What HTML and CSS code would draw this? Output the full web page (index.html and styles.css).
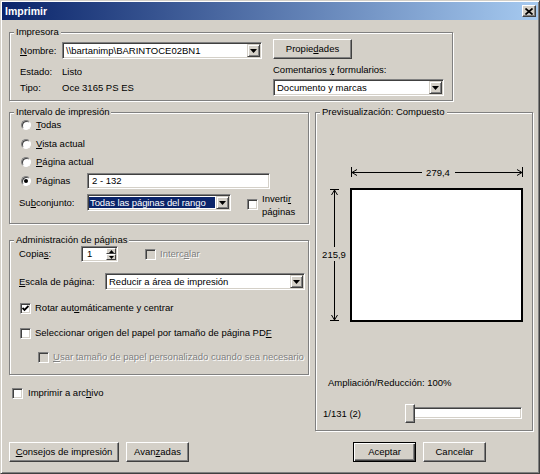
FILE: index.html
```html
<!DOCTYPE html>
<html lang="es">
<head>
<meta charset="utf-8">
<title>Imprimir</title>
<link rel="stylesheet" href="styles.css">
</head>
<body>
<div class="window">
  <div class="titlebar">
    <span class="title">Imprimir</span>
    <span class="close"><svg width="8" height="7" viewBox="0 0 8 7"><path d="M0.5 0.5L7.5 6.5M7.5 0.5L0.5 6.5" stroke="#000" stroke-width="1.7" fill="none"/></svg></span>
  </div>
  <div class="content">
    <fieldset class="group g-printer">
      <legend>Impresora</legend>
      <div class="printer-body">
        <div class="printer-left">
          <div class="prow prow-name">
            <span class="plabel"><u>N</u>ombre:</span>
            <div class="combo w-name"><span class="combo-text">\\bartanimp\BARINTOCE02BN1</span><span class="drop"><svg width="7" height="4" viewBox="0 0 7 4"><path d="M0 0H7L3.5 4Z"/></svg></span></div>
          </div>
          <div class="prow prow-info first-info"><span class="plabel">Estado:</span><span>Listo</span></div>
          <div class="prow prow-info"><span class="plabel">Tipo:</span><span>Oce 3165 PS ES</span></div>
        </div>
        <div class="printer-right">
          <button class="btn btn-props">Propie<u>d</u>ades</button>
          <div class="label-comments">Comentarios <u>y</u> formularios:</div>
          <div class="combo w-comments"><span class="combo-text">Documento y marcas</span><span class="drop"><svg width="7" height="4" viewBox="0 0 7 4"><path d="M0 0H7L3.5 4Z"/></svg></span></div>
        </div>
      </div>
    </fieldset>

    <div class="main">
      <div class="col-left">
        <fieldset class="group g-range">
          <legend>Intervalo de impresión</legend>
          <div class="range-body">
            <div class="radio-row"><span class="radio"></span><span><u>T</u>odas</span></div>
            <div class="radio-row"><span class="radio"></span><span><u>V</u>ista actual</span></div>
            <div class="radio-row"><span class="radio"></span><span><u>P</u>ágina actual</span></div>
            <div class="radio-row"><span class="radio checked"><i class="dot"></i></span><span class="pages-label">Pá<u>g</u>inas</span><div class="field w-pages">2 - 132</div></div>
            <div class="subset-row">
              <span class="subset-label">Su<u>b</u>conjunto:</span>
              <div class="combo w-subset"><span class="combo-text selected">Todas las páginas del rango</span><span class="drop"><svg width="7" height="4" viewBox="0 0 7 4"><path d="M0 0H7L3.5 4Z"/></svg></span></div>
              <span class="cb invert-cb"></span>
              <span class="invert-text">Inverti<u>r</u><br>páginas</span>
            </div>
          </div>
        </fieldset>

        <fieldset class="group g-pages">
          <legend>Administración de páginas</legend>
          <div class="pages-body">
            <div class="copies-row">
              <span class="copies-label">Copia<u>s</u>:</span>
              <div class="spin">
                <span class="spin-text">1</span>
                <span class="spin-btns">
                  <span class="spin-btn"><svg width="5" height="3" viewBox="0 0 5 3"><path d="M0 3H5L2.5 0Z"/></svg></span>
                  <span class="spin-btn"><svg width="5" height="3" viewBox="0 0 5 3"><path d="M0 0H5L2.5 3Z"/></svg></span>
                </span>
              </div>
              <span class="cb disabled collate-cb"></span>
              <span class="disabled-text">Interc<u>a</u>lar</span>
            </div>
            <div class="scale-row">
              <span class="scale-label"><u>E</u>scala de página:</span>
              <div class="combo w-scale"><span class="combo-text">Reducir a área de impresión</span><span class="drop"><svg width="7" height="4" viewBox="0 0 7 4"><path d="M0 0H7L3.5 4Z"/></svg></span></div>
            </div>
            <div class="check-row rotate-row">
              <span class="cb"><svg width="7" height="7" viewBox="0 0 7 7"><path d="M0.5 3L2.5 5L6.5 1" stroke="#000" stroke-width="1.8" fill="none"/></svg></span>
              <span>Rotar aut<u>o</u>máticamente y centrar</span>
            </div>
            <div class="check-row source-row">
              <span class="cb"></span>
              <span>Seleccionar origen del papel por tamaño de página PD<u>F</u></span>
            </div>
            <div class="check-row custom-row">
              <span class="cb disabled"></span>
              <span class="disabled-text"><u>U</u>sar tamaño de papel personalizado cuando sea necesario</span>
            </div>
          </div>
        </fieldset>

        <div class="check-row file-row">
          <span class="cb"></span>
          <span>Imprimir a arc<u>h</u>ivo</span>
        </div>
      </div>

      <fieldset class="group g-preview">
        <legend>Previsualización: Compuesto</legend>
        <svg class="preview-svg" width="216" height="170" viewBox="0 0 216 170">
          <g stroke="#000" stroke-width="1" fill="none">
            <path d="M35.5 7V17M206.5 7V17"/>
            <path d="M36 12.5H106M139 12.5H206"/>
            <path d="M41 9.5L36 12.5L41 15.5M201 9.5L206 12.5L201 15.5"/>
            <path d="M14 29.5H23M14 160.5H23"/>
            <path d="M18.5 30V87M18.5 101V160"/>
            <path d="M15.5 35L18.5 30L21.5 35M15.5 155L18.5 160L21.5 155"/>
          </g>
          <rect x="35" y="29" width="171" height="132" fill="#fff" stroke="#000" stroke-width="2"/>
          <text x="122" y="16" text-anchor="middle" class="dim-text">279,4</text>
          <text x="18" y="98" text-anchor="middle" class="dim-text">215,9</text>
        </svg>
        <div class="zoom-label">Ampliación/Reducción: 100%</div>
        <div class="slider-row">
          <span class="page-count">1/131 (2)</span>
          <div class="slider">
            <div class="track"></div>
            <div class="thumb"></div>
          </div>
        </div>
      </fieldset>
    </div>

    <div class="footer">
      <div class="footer-left">
        <button class="btn btn-tips"><u>C</u>onsejos de impresión</button>
        <button class="btn btn-std">Avan<u>z</u>adas</button>
      </div>
      <div class="footer-right">
        <button class="btn btn-std btn-default">Aceptar</button>
        <button class="btn btn-std">Cancelar</button>
      </div>
    </div>
  </div>
</div>
</body>
</html>
```

FILE: styles.css
```css
html, body {
  margin: 0;
  padding: 0;
  background: #D4D0C8;
}

body {
  font-family: "Liberation Sans", Arial, sans-serif;
  font-size: 9.5px;
  color: #000;
}

u {
  text-decoration: underline;
}

.window {
  width: 540px;
  height: 474px;
  box-sizing: border-box;
  background: #D4D0C8;
  border: 1px solid;
  border-color: #D4D0C8 #404040 #404040 #D4D0C8;
  box-shadow: inset 1px 1px #fff, inset -1px -1px #808080;
  line-height: 12px;
  overflow: hidden;
}

/* Title bar */
.titlebar {
  margin: 1px 1px 0;
  height: 18px;
  display: flex;
  align-items: center;
  padding: 0 2px 0 3px;
  background: linear-gradient(to right, #0A246A, #A6CAF0);
}

.title {
  flex: 1;
  color: #fff;
  font-weight: bold;
  font-size: 10.5px;
}

.close {
  width: 14px;
  height: 12px;
  box-sizing: border-box;
  background: #D4D0C8;
  border: 1px solid;
  border-color: #fff #404040 #404040 #fff;
  box-shadow: inset -1px -1px #808080;
  display: flex;
  align-items: center;
  justify-content: center;
}

.content {
  padding: 6px 0 0 8px;
}

/* Group boxes */
fieldset.group {
  margin: 0;
  padding: 0;
  min-width: 0;
  box-sizing: border-box;
  border: 1px solid #808080;
  box-shadow: inset 1px 1px #fff, 1px 1px #fff;
}

fieldset.group legend {
  margin-left: 4px;
  padding: 0 2px;
  line-height: 12px;
  background: #D4D0C8;
}

/* 3D primitives */
.btn {
  box-sizing: border-box;
  font: inherit;
  color: #000;
  background: #D4D0C8;
  border: 1px solid;
  border-color: #fff #404040 #404040 #fff;
  box-shadow: inset -1px -1px #808080;
  padding: 0;
  margin: 0;
  height: 20px;
  line-height: 12px;
}

.btn-default {
  border-color: #000;
  box-shadow: inset 1px 1px #fff, inset -1px -1px #404040, inset -2px -2px #808080;
}

.combo, .field, .spin, .track {
  box-sizing: border-box;
  background: #fff;
  border: 1px solid;
  border-color: #808080 #fff #fff #808080;
  box-shadow: inset 1px 1px #404040, inset -1px -1px #D4D0C8;
}

.combo {
  height: 17px;
  padding: 1px;
  display: flex;
  flex: none;
}

.combo-text {
  flex: 1;
  display: flex;
  align-items: center;
  padding-left: 2px;
  white-space: nowrap;
  overflow: hidden;
}

.combo-text.selected {
  margin: 1px 1px 1px 0;
  padding-left: 1px;
  background: #0A246A;
  color: #fff;
  letter-spacing: -0.1px;
}

.drop {
  width: 13px;
  flex: none;
  box-sizing: border-box;
  background: #D4D0C8;
  border: 1px solid;
  border-color: #D4D0C8 #404040 #404040 #D4D0C8;
  box-shadow: inset 1px 1px #fff, inset -1px -1px #808080;
  display: flex;
  align-items: center;
  justify-content: center;
}

.field {
  height: 16px;
  padding-left: 4px;
  display: flex;
  align-items: center;
}

.cb {
  width: 11px;
  height: 11px;
  flex: none;
  box-sizing: border-box;
  background: #fff;
  border: 1px solid;
  border-color: #808080 #fff #fff #808080;
  box-shadow: inset 1px 1px #404040, inset -1px -1px #D4D0C8;
  display: flex;
  align-items: center;
  justify-content: center;
}

.cb.disabled {
  background: #D4D0C8;
}

.radio {
  width: 10px;
  height: 10px;
  flex: none;
  box-sizing: border-box;
  border-radius: 50%;
  background: #fff;
  border: 1px solid;
  border-color: #808080 #fff #fff #808080;
  box-shadow: inset 1px 1px #404040;
  margin-right: 5px;
  display: flex;
  align-items: center;
  justify-content: center;
}

.dot {
  width: 4px;
  height: 4px;
  border-radius: 50%;
  background: #000;
}

.disabled-text {
  color: #808080;
  text-shadow: 1px 1px #fff;
}

/* Impresora */
fieldset.g-printer {
  width: 444px;
  height: 75px;
}

.printer-body {
  display: flex;
  gap: 11px;
  padding-left: 10px;
}

.printer-left {
  width: 242px;
  padding-top: 4px;
}

.prow {
  display: flex;
  align-items: center;
}

.prow-name {
  height: 17px;
}

.plabel {
  width: 42px;
  flex: none;
}

.prow-info {
  height: 16px;
}

.first-info {
  margin-top: 5px;
}

.w-name {
  width: 200px;
}

.printer-right {
  width: 171px;
  padding-top: 1px;
  display: flex;
  flex-direction: column;
  align-items: flex-start;
}

.btn-props {
  width: 79px;
}

.label-comments {
  margin-top: 5px;
  height: 12px;
}

.w-comments {
  width: 171px;
  margin-top: 3px;
}

/* Main area */
.main {
  display: flex;
  align-items: flex-start;
  gap: 6px;
  margin-top: 5px;
}

.col-left {
  width: 300px;
  display: flex;
  flex-direction: column;
}

/* Intervalo */
fieldset.g-range {
  width: 300px;
  height: 118px;
}

.range-body {
  padding-left: 11px;
  margin-top: -2px;
}

.radio-row {
  height: 18.5px;
  display: flex;
  align-items: center;
}

.pages-label {
  width: 51px;
}

.w-pages {
  width: 183px;
}

.subset-row {
  margin-top: 4px;
  margin-left: -2px;
  height: 17px;
  display: flex;
  align-items: center;
}

.subset-label {
  width: 68px;
  flex: none;
}

.w-subset {
  width: 144px;
}

.invert-cb {
  margin-left: 16px;
  margin-top: 4px;
}

.invert-text {
  margin-left: 4px;
  line-height: 13px;
  margin-top: 4px;
}

/* Administración */
fieldset.g-pages {
  margin-top: 10px;
  width: 300px;
  height: 141px;
}

.pages-body {
  padding-left: 9px;
}

.copies-row {
  height: 16px;
  display: flex;
  align-items: center;
}

.copies-label {
  width: 62px;
  flex: none;
}

.spin {
  width: 37px;
  height: 16px;
  padding: 1px;
  display: flex;
}

.spin-text {
  flex: 1;
  padding-left: 4px;
  display: flex;
  align-items: center;
}

.spin-btns {
  width: 10px;
  display: flex;
  flex-direction: column;
}

.spin-btn {
  flex: 1;
  box-sizing: border-box;
  background: #D4D0C8;
  border: 1px solid;
  border-color: #fff #404040 #404040 #fff;
  display: flex;
  align-items: center;
  justify-content: center;
}

.collate-cb {
  margin-left: 27px;
  margin-right: 4px;
}

.scale-row {
  margin-top: 11px;
  height: 17px;
  display: flex;
  align-items: center;
}

.scale-label {
  width: 86px;
  flex: none;
}

.w-scale {
  width: 200px;
}

.check-row {
  height: 14px;
  display: flex;
  align-items: center;
  white-space: nowrap;
}

.check-row .cb {
  margin-right: 4px;
}

.rotate-row {
  margin-top: 11px;
  padding-left: 1px;
}

.source-row {
  margin-top: 11px;
  padding-left: 1px;
}

.custom-row {
  margin-top: 10px;
  padding-left: 19px;
}

.file-row {
  margin-top: 11px;
  padding-left: 3px;
}

.file-row .cb {
  margin-right: 5px;
}

/* Previsualización */
fieldset.g-preview {
  width: 218px;
  height: 325px;
}

.preview-svg {
  display: block;
  margin-top: 42px;
}

.dim-text {
  font-family: "Liberation Sans", Arial, sans-serif;
  font-size: 9.5px;
  fill: #000;
}

.zoom-label {
  margin-top: 47px;
  padding-left: 12px;
  height: 12px;
}

.slider-row {
  margin-top: 15px;
  height: 19px;
  padding-left: 7px;
  display: flex;
  align-items: center;
}

.page-count {
  width: 82px;
  flex: none;
}

.slider {
  position: relative;
  width: 117px;
  height: 19px;
}

.track {
  margin-top: 3px;
  height: 12px;
}

.thumb {
  position: absolute;
  left: 0;
  top: 0;
  width: 10px;
  height: 19px;
  box-sizing: border-box;
  background: #D4D0C8;
  border: 1px solid;
  border-color: #fff #404040 #404040 #fff;
  box-shadow: inset -1px -1px #808080;
}

/* Footer */
.footer {
  margin-top: 11px;
  display: flex;
}

.footer-left, .footer-right {
  display: flex;
  gap: 7px;
}

.footer-right {
  margin-left: 164px;
}

.btn-tips {
  width: 110px;
}

.btn-std {
  width: 63px;
}
```
